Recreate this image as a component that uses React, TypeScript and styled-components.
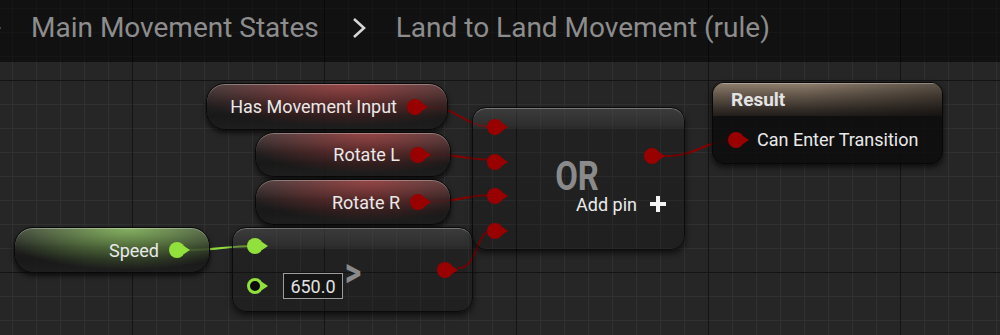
import React from "react";
import styled, { createGlobalStyle } from "styled-components";

const GlobalStyle = createGlobalStyle`
  html, body {
    margin: 0;
    padding: 0;
    background: #262626;
    overflow: hidden;
  }
  * {
    box-sizing: border-box;
  }
`;

const BOOL = "#990000";
const FLOAT = "#92e03c";

const Screen = styled.div`
  width: 1000px;
  height: 335px;
  overflow: hidden;
  font-family: Roboto, "Liberation Sans", sans-serif;
  background-color: #262626;
  background-image: linear-gradient(to right, #141414 1px, transparent 1px),
    linear-gradient(to bottom, #141414 1px, transparent 1px),
    linear-gradient(to right, #313131 1px, transparent 1px),
    linear-gradient(to bottom, #313131 1px, transparent 1px);
  background-size: 192px 192px, 192px 192px, 24px 24px, 24px 24px;
  background-position: 132px 80px, 132px 80px, 12px 8px, 12px 8px;
`;

const TopBar = styled.div`
  height: 62px;
  display: flex;
  align-items: flex-start;
  padding-top: 14px;
  background: rgba(0, 0, 0, 0.55);
`;

const Crumb = styled.span`
  font-size: 28px;
  line-height: 28px;
  color: #8d8d8d;
  white-space: nowrap;
`;

const ChevronBox = styled.svg<{ $edge?: boolean }>`
  flex-shrink: 0;
  margin: 3px 30px 0 ${(p) => (p.$edge ? "-13px" : "33px")};
`;

const Graph = styled.div`
  position: relative;
  height: 273px;
`;

const Wires = styled.svg`
  position: absolute;
  left: 0;
  top: 0;
`;

const NodeBase = styled.div<{ $x: number; $y: number; $w: number; $h: number }>`
  position: absolute;
  left: ${(p) => p.$x}px;
  top: ${(p) => p.$y - 62}px;
  width: ${(p) => p.$w}px;
  height: ${(p) => p.$h}px;
  color: #e9e9e9;
  font-size: 18px;
`;

const VarNode = styled(NodeBase)<{ $glow: string }>`
  border-radius: 19px;
  border: 1px solid #090909;
  background: linear-gradient(to bottom, rgba(255, 255, 255, 0.1), rgba(255, 255, 255, 0) 45%),
    radial-gradient(ellipse 70% 95% at 58% 0%, ${(p) => p.$glow}, transparent 100%),
    linear-gradient(to bottom, rgba(44, 44, 44, 0.85), rgba(22, 22, 22, 0.85) 70%, rgba(28, 28, 28, 0.85));
  box-shadow: 0 3px 5px rgba(0, 0, 0, 0.65), inset 0 1px 0 rgba(255, 255, 255, 0.3);
  display: flex;
  align-items: center;
  justify-content: flex-end;
  gap: 10px;
  padding-right: 18px;
`;

const CompactNode = styled(NodeBase)`
  border-radius: 14px;
  border: 1px solid #0b0b0b;
  background: linear-gradient(
    to bottom,
    rgba(78, 78, 78, 0.55) 0,
    rgba(52, 52, 52, 0.45) 19px,
    rgba(14, 14, 14, 0.2) 21px,
    rgba(10, 10, 10, 0.22) 100%
  );
  box-shadow: 0 3px 6px rgba(0, 0, 0, 0.65), inset 0 1px 0 rgba(255, 255, 255, 0.3);
  display: flex;
  justify-content: space-between;
`;

const Watermark = styled.span<{ $size: number; $dx: number; $dy: number; $squeeze: number }>`
  position: absolute;
  left: 50%;
  top: 50%;
  transform: translate(calc(-50% + ${(p) => p.$dx}px), calc(-50% + ${(p) => p.$dy}px))
    scaleX(${(p) => p.$squeeze});
  font-size: ${(p) => p.$size}px;
  font-weight: 700;
  line-height: 0.72;
  color: #8a8a8a;
  pointer-events: none;
`;

const PinColumn = styled.div<{ $padTop: number; $rowH: number; $gap: number }>`
  display: flex;
  flex-direction: column;
  padding: ${(p) => p.$padTop}px 0 0 14px;
  gap: ${(p) => p.$gap}px;
  & > * {
    height: ${(p) => p.$rowH}px;
  }
`;

const PinRow = styled.div`
  display: flex;
  align-items: center;
  gap: 14px;
  position: relative;
  z-index: 1;
`;

const OutColumn = styled.div<{ $padTop?: number; $padRight: number }>`
  display: flex;
  flex-direction: column;
  align-items: flex-end;
  justify-content: ${(p) => (p.$padTop === undefined ? "center" : "flex-start")};
  padding: ${(p) => p.$padTop ?? 0}px ${(p) => p.$padRight}px 0 0;
  gap: 24px;
  & > * {
    height: 24px;
  }
`;

const AddPin = styled.div`
  display: flex;
  align-items: center;
  gap: 13px;
  font-size: 18px;
  color: #ececec;
`;

const Pin = styled.span<{ $color: string; $hollow?: boolean }>`
  position: relative;
  display: inline-block;
  flex-shrink: 0;
  width: 16px;
  height: 16px;
  margin-right: 6px;
  border-radius: 50%;
  background: ${(p) => (p.$hollow ? "#0d0d0d" : p.$color)};
  border: ${(p) => (p.$hollow ? `3px solid ${p.$color}` : "none")};
  &::after {
    content: "";
    position: absolute;
    left: 100%;
    top: 50%;
    margin-left: ${(p) => (p.$hollow ? "2px" : "-1px")};
    transform: translateY(-50%);
    border-left: 6px solid ${(p) => p.$color};
    border-top: 4px solid transparent;
    border-bottom: 4px solid transparent;
  }
`;

const ValueBox = styled.span`
  display: inline-flex;
  align-items: center;
  justify-content: center;
  width: 60px;
  height: 26px;
  border: 1px solid #9c9c9c;
  background: #141414;
  color: #e2e2e2;
  font-size: 18px;
`;

const ResultNode = styled(NodeBase)`
  border-radius: 12px;
  border: 1px solid #070707;
  overflow: hidden;
  background: rgba(12, 12, 12, 0.85);
  box-shadow: 0 3px 6px rgba(0, 0, 0, 0.7);
  display: flex;
  flex-direction: column;
`;

const ResultHeader = styled.div`
  height: 33px;
  padding-left: 18px;
  display: flex;
  align-items: center;
  font-size: 19px;
  font-weight: 700;
  color: #e4e4e4;
  background: linear-gradient(to right, rgba(0, 0, 0, 0) 40%, rgba(0, 0, 0, 0.35)),
    linear-gradient(
      to bottom,
      rgba(150, 133, 115, 0.95) 0,
      rgba(110, 96, 82, 0.9) 35%,
      rgba(55, 48, 42, 0.9) 80%,
      rgba(35, 31, 28, 0.9)
    );
  box-shadow: inset 0 1px 0 rgba(255, 255, 255, 0.3);
`;

const ResultBody = styled.div`
  flex: 1;
  display: flex;
  align-items: center;
  gap: 7px;
  padding-left: 15px;
`;

const Chevron = ({ color, edge }: { color: string; edge?: boolean }) => (
  <ChevronBox $edge={edge} width="14" height="22" viewBox="0 0 14 22">
    <polyline points="2,2 12,11 2,20" fill="none" stroke={color} strokeWidth="2.6" strokeLinejoin="miter" />
  </ChevronBox>
);

const Plus = () => (
  <svg width="16" height="16" viewBox="0 0 16 16">
    <rect x="6" y="0" width="4" height="16" fill="#f4f4f4" />
    <rect x="0" y="6" width="16" height="4" fill="#f4f4f4" />
  </svg>
);

const wire = (x1: number, y1: number, x2: number, y2: number, d: number) =>
  `M${x1} ${y1} C${x1 + d} ${y1}, ${x2 - d} ${y2}, ${x2} ${y2}`;

const boolWires = [
  wire(427, 107, 495, 127, 34),
  wire(428, 154, 495, 160, 34),
  wire(428, 202, 495, 195, 34),
  wire(458, 268, 495, 230, 22),
  wire(664, 156, 736, 141, 36),
];

export default function App() {
  return (
    <Screen>
      <GlobalStyle />
      <TopBar>
        <Chevron color="#a8a8a8" edge />
        <Crumb>Main Movement States</Crumb>
        <Chevron color="#d6d6d6" />
        <Crumb>Land to Land Movement (rule)</Crumb>
      </TopBar>
      <Graph>
        <Wires width="1000" height="273" viewBox="0 62 1000 273">
          {boolWires.map((d, i) => (
            <path key={i} d={d} fill="none" stroke="#8a0000" strokeWidth="2" />
          ))}
          <path d={wire(188, 250, 256, 246, 30)} fill="none" stroke={FLOAT} strokeWidth="2" />
        </Wires>

        <VarNode $x={206} $y={83} $w={242} $h={47} $glow="rgba(160, 52, 52, 0.8)">
          <span>Has Movement Input</span>
          <Pin $color={BOOL} />
        </VarNode>
        <VarNode $x={255} $y={132} $w={196} $h={45} $glow="rgba(160, 52, 52, 0.8)">
          <span>Rotate L</span>
          <Pin $color={BOOL} />
        </VarNode>
        <VarNode $x={255} $y={179} $w={196} $h={46} $glow="rgba(160, 52, 52, 0.8)">
          <span>Rotate R</span>
          <Pin $color={BOOL} />
        </VarNode>
        <VarNode $x={14} $y={227} $w={196} $h={46} $glow="rgba(140, 200, 90, 0.8)">
          <span>Speed</span>
          <Pin $color={FLOAT} />
        </VarNode>

        <CompactNode $x={232} $y={227} $w={241} $h={85}>
          <Watermark $size={40} $dx={0} $dy={3} $squeeze={0.8}>&gt;</Watermark>
          <PinColumn $padTop={4} $rowH={28} $gap={12}>
            <PinRow>
              <Pin $color={FLOAT} />
            </PinRow>
            <PinRow>
              <Pin $color={FLOAT} $hollow />
              <ValueBox>650.0</ValueBox>
            </PinRow>
          </PinColumn>
          <OutColumn $padRight={13}>
            <Pin $color={BOOL} />
          </OutColumn>
        </CompactNode>

        <CompactNode $x={472} $y={107} $w={213} $h={143}>
          <Watermark $size={40} $dx={-2} $dy={-2} $squeeze={0.82}>OR</Watermark>
          <PinColumn $padTop={2} $rowH={34.5} $gap={0}>
            <PinRow>
              <Pin $color={BOOL} />
            </PinRow>
            <PinRow>
              <Pin $color={BOOL} />
            </PinRow>
            <PinRow>
              <Pin $color={BOOL} />
            </PinRow>
            <PinRow>
              <Pin $color={BOOL} />
            </PinRow>
          </PinColumn>
          <OutColumn $padTop={36} $padRight={18}>
            <PinRow>
              <Pin $color={BOOL} />
            </PinRow>
            <AddPin>
              Add pin
              <Plus />
            </AddPin>
          </OutColumn>
        </CompactNode>

        <ResultNode $x={712} $y={82} $w={231} $h={82}>
          <ResultHeader>Result</ResultHeader>
          <ResultBody>
            <Pin $color={BOOL} />
            <span>Can Enter Transition</span>
          </ResultBody>
        </ResultNode>
      </Graph>
    </Screen>
  );
}
